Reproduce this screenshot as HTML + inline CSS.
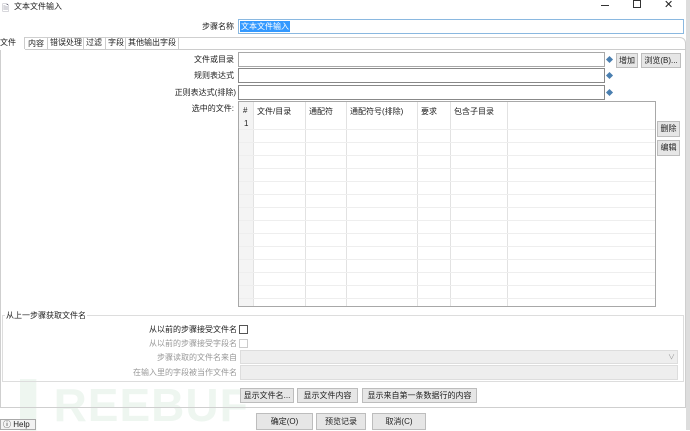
<!DOCTYPE html>
<html><head><meta charset="utf-8"><style>
*{box-sizing:border-box;margin:0;padding:0}
body{width:690px;height:430px;overflow:hidden;background:#fff;font-family:"Liberation Sans","Noto Sans CJK SC",sans-serif;font-size:8px;color:#222;position:relative}
.a{position:absolute;white-space:nowrap}
.r{text-align:right}
.in{position:absolute;border:1px solid #a8a8a8;background:#fff}
.btn{position:absolute;border:1px solid #bdbdbd;background:#e6e6e6;text-align:center;line-height:13px;font-size:8px}
.dia{position:absolute;width:5px;height:5px;background:#4a7fb0;transform:rotate(45deg)}
.vl{position:absolute;width:1px;background:#e2e2e2}
.hl{position:absolute;height:1px;background:#eee}
.gray{color:#999}
</style></head><body>
<div class="a" style="left:2px;top:1px;font-size:9px;color:#667">🗎</div>
<div class="a" style="left:14px;top:1px;font-size:8px">文本文件输入</div>
<div class="a" style="left:601px;top:5px;width:8px;height:1px;background:#333"></div>
<div class="a" style="left:633px;top:0px;width:8px;height:8px;border:1px solid #333"></div>
<div class="a" style="left:664px;top:-2px;font-size:11px">✕</div>
<div class="a" style="left:686px;top:0;width:4px;height:430px;background:#ddd"></div>

<div class="a" style="left:20px;top:382px;font-size:46px;font-weight:bold;color:#eef6f0;letter-spacing:1px;line-height:46px">▌REEBUF</div>

<div class="a r" style="left:150px;width:84px;top:21px">步骤名称</div>
<div class="in" style="left:238px;top:19px;width:446px;height:15px;border-color:#8ab8e0"></div>
<div class="a" style="left:240px;top:21px;background:#3399ff;color:#fff;padding:0 1px;line-height:11px">文本文件输入</div>

<div class="a" style="left:0;top:37px;width:686px;height:371px;border:1px solid #cfcfcf;border-radius:0 6px 0 0"></div>
<div class="a" style="left:0;top:37px;width:25px;height:13px;background:#fff;border-right:1px solid #ccc">文件</div>
<div class="a" style="left:0;top:49px;width:686px;height:1px;background:#ccc"></div>
<div class="a" style="left:0;top:49px;width:25px;height:1px;background:#fff"></div>
<div class="a" style="left:28px;top:38px">内容</div>
<div class="a" style="left:47px;top:37px;height:12px;border-left:1px solid #ccc;padding-left:2px">错误处理</div>
<div class="a" style="left:83px;top:37px;height:12px;border-left:1px solid #ccc;padding-left:2px">过滤</div>
<div class="a" style="left:105px;top:37px;height:12px;border-left:1px solid #ccc;padding-left:2px">字段</div>
<div class="a" style="left:125px;top:37px;height:12px;border-left:1px solid #ccc;border-right:1px solid #ccc;padding:0 2px">其他输出字段</div>

<div class="a r" style="left:150px;width:84px;top:54px">文件或目录</div>
<div class="in" style="left:238px;top:52px;width:367px;height:15px"></div>
<div class="dia" style="left:607px;top:57px"></div>
<div class="btn" style="left:616px;top:53px;width:22px;height:15px">增加</div>
<div class="btn" style="left:641px;top:53px;width:40px;height:15px">浏览(B)...</div>
<div class="a r" style="left:150px;width:84px;top:70px">规则表达式</div>
<div class="in" style="left:238px;top:68px;width:367px;height:15px;border-color:#888"></div>
<div class="dia" style="left:607px;top:73px"></div>
<div class="a r" style="left:150px;width:86px;top:87px">正则表达式(排除)</div>
<div class="in" style="left:238px;top:85px;width:367px;height:15px;border-color:#888"></div>
<div class="dia" style="left:607px;top:90px"></div>

<div class="a r" style="left:150px;width:84px;top:103px">选中的文件:</div>
<div class="in" style="left:238px;top:101px;width:418px;height:206px"></div>
<div class="a" style="left:239px;top:102px;width:14px;height:204px;background:#f4f4f4"></div>
<div class="vl" style="left:253px;top:102px;height:204px"></div>
<div class="vl" style="left:305px;top:102px;height:204px"></div>
<div class="vl" style="left:346px;top:102px;height:204px"></div>
<div class="vl" style="left:417px;top:102px;height:204px"></div>
<div class="vl" style="left:450px;top:102px;height:204px"></div>
<div class="vl" style="left:507px;top:102px;height:204px"></div>
<div class="hl" style="left:239px;top:129px;width:416px"></div>
<div class="hl" style="left:239px;top:142px;width:416px"></div>
<div class="hl" style="left:239px;top:155px;width:416px"></div>
<div class="hl" style="left:239px;top:168px;width:416px"></div>
<div class="hl" style="left:239px;top:181px;width:416px"></div>
<div class="hl" style="left:239px;top:194px;width:416px"></div>
<div class="hl" style="left:239px;top:207px;width:416px"></div>
<div class="hl" style="left:239px;top:220px;width:416px"></div>
<div class="hl" style="left:239px;top:233px;width:416px"></div>
<div class="hl" style="left:239px;top:246px;width:416px"></div>
<div class="hl" style="left:239px;top:259px;width:416px"></div>
<div class="hl" style="left:239px;top:272px;width:416px"></div>
<div class="hl" style="left:239px;top:285px;width:416px"></div>
<div class="hl" style="left:239px;top:298px;width:416px"></div>
<div class="a" style="left:243px;top:106px">#</div>
<div class="a" style="left:244px;top:119px">1</div>
<div class="a" style="left:257px;top:106px">文件/目录</div>
<div class="a" style="left:309px;top:106px">通配符</div>
<div class="a" style="left:350px;top:106px">通配符号(排除)</div>
<div class="a" style="left:421px;top:106px">要求</div>
<div class="a" style="left:454px;top:106px">包含子目录</div>
<div class="btn" style="left:657px;top:121px;width:23px;height:16px;line-height:14px">删除</div>
<div class="btn" style="left:657px;top:140px;width:23px;height:16px;line-height:14px">编辑</div>

<div class="a" style="left:2px;top:315px;width:682px;height:67px;border:1px solid #ddd"></div>
<div class="a" style="left:5px;top:310px;background:#fff;padding:0 1px">从上一步骤获取文件名</div>
<div class="a r" style="left:100px;width:137px;top:324px">从以前的步骤接受文件名</div>
<div class="a" style="left:239px;top:325px;width:9px;height:9px;border:1px solid #555"></div>
<div class="a r gray" style="left:100px;width:137px;top:338px">从以前的步骤接受字段名</div>
<div class="a" style="left:239px;top:339px;width:9px;height:9px;border:1px solid #ccc"></div>
<div class="a r gray" style="left:100px;width:137px;top:352px">步骤读取的文件名来自</div>
<div class="a" style="left:240px;top:350px;width:438px;height:14px;border:1px solid #ddd;background:#eee"></div>
<div class="a gray" style="left:668px;top:352px;font-size:7px">∨</div>
<div class="a r gray" style="left:100px;width:137px;top:367px">在输入里的字段被当作文件名</div>
<div class="a" style="left:240px;top:365px;width:438px;height:15px;border:1px solid #ddd;background:#eee"></div>

<div class="btn" style="left:240px;top:388px;width:54px;height:15px">显示文件名...</div>
<div class="btn" style="left:297px;top:388px;width:61px;height:15px">显示文件内容</div>
<div class="btn" style="left:362px;top:388px;width:115px;height:15px">显示来自第一条数据行的内容</div>

<div class="btn" style="left:256px;top:413px;width:57px;height:17px;line-height:15px">确定(O)</div>
<div class="btn" style="left:316px;top:413px;width:50px;height:17px;line-height:15px">预览记录</div>
<div class="btn" style="left:372px;top:413px;width:54px;height:17px;line-height:15px">取消(C)</div>
<div class="a" style="left:0;top:419px;width:36px;height:11px;border:1px solid #aaa;background:#f2f2f2;padding-left:2px;line-height:10px">ⓘ Help</div>
</body></html>
